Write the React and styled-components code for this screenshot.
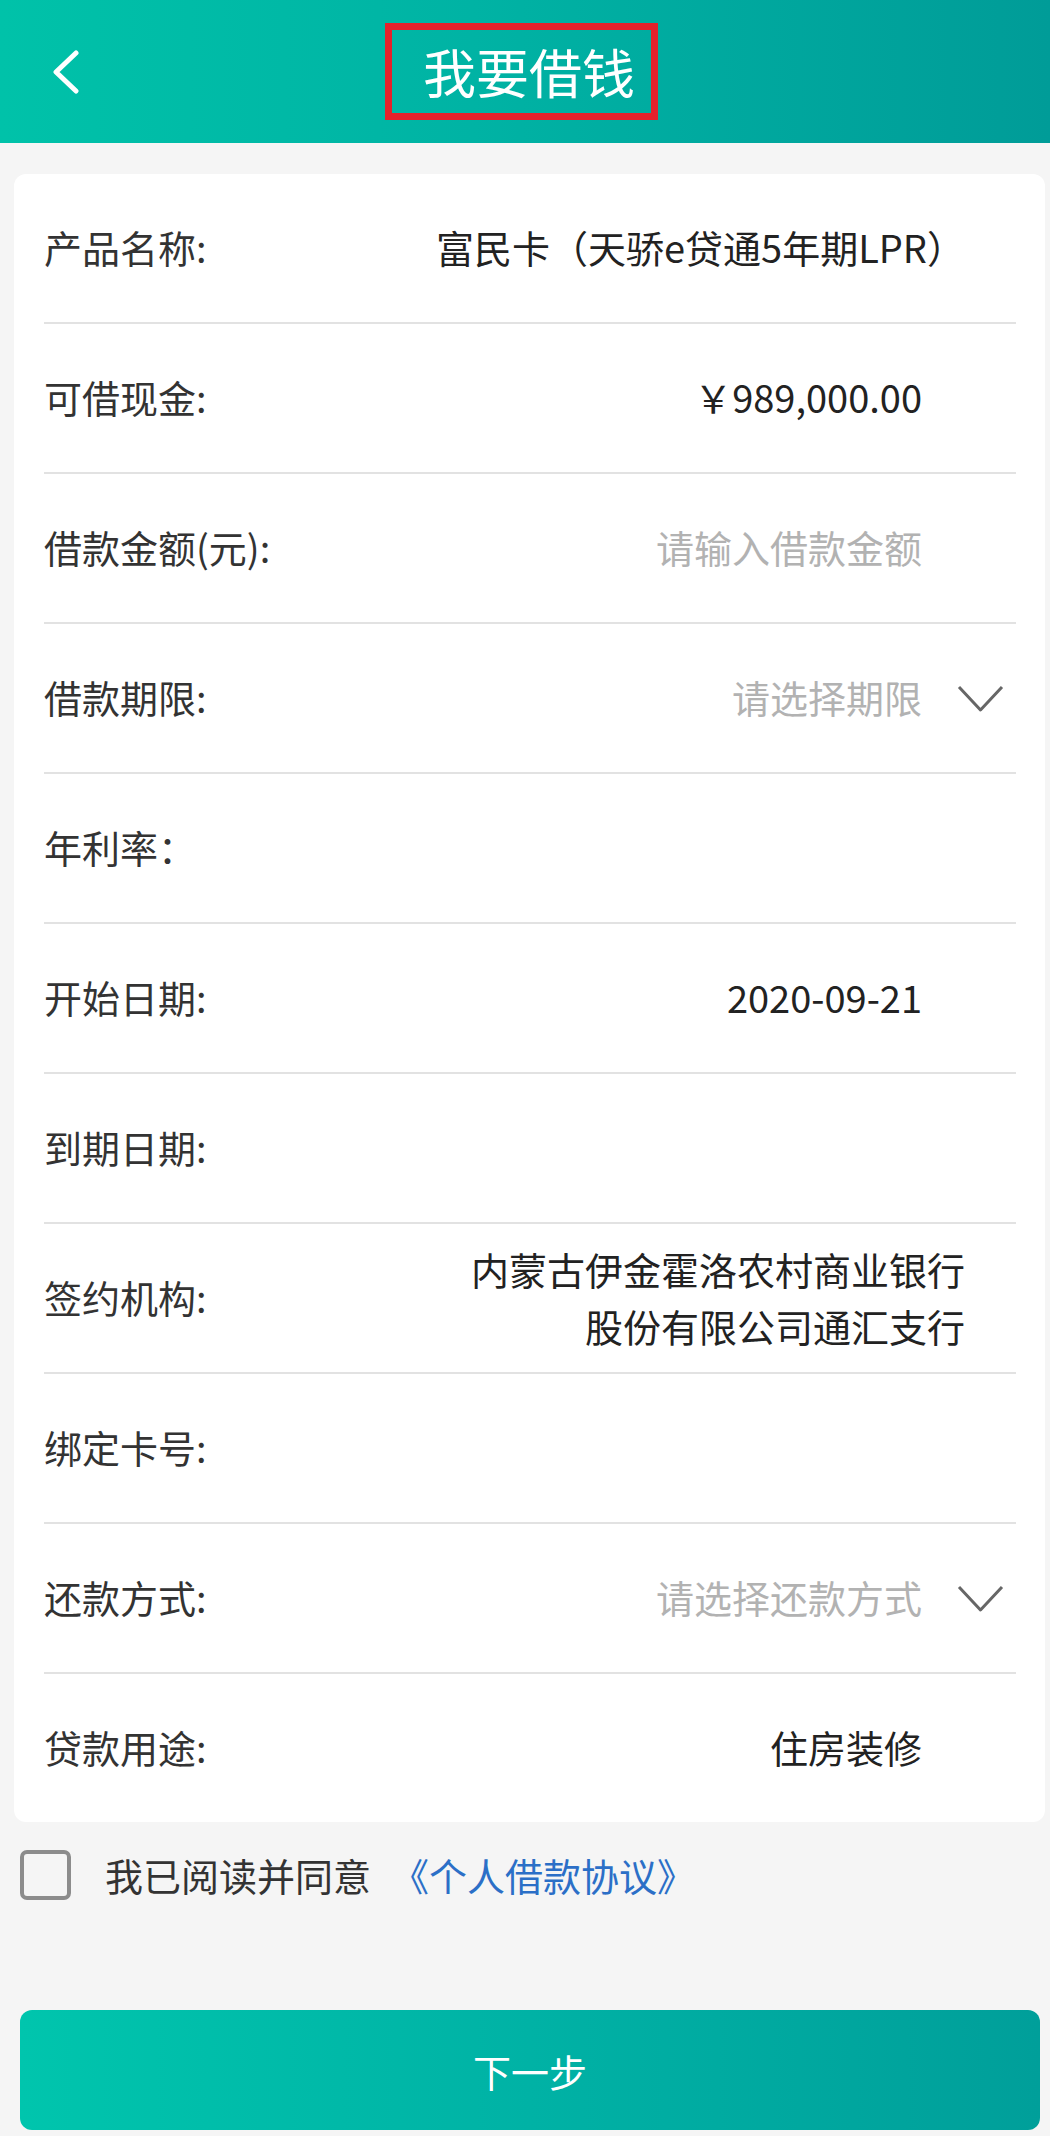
import React from "react";
import styled, { createGlobalStyle } from "styled-components";

const GlobalStyle = createGlobalStyle`
  body {
    margin: 0;
    background: #f5f5f5;
    font-family: "Noto Sans CJK SC", "Noto Sans", sans-serif;
  }
`;

const Page = styled.div`
  width: 1050px;
  min-height: 2136px;
  background: #f5f5f5;
`;

const Header = styled.header`
  height: 143px;
  display: flex;
  align-items: center;
  background: linear-gradient(90deg, #00c2a9 0%, #00b3a4 45%, #009c98 100%);
`;

const BackButton = styled.svg`
  width: 28px;
  height: 44px;
  margin-left: 52px;
  flex-shrink: 0;
`;

const TitleBox = styled.div`
  margin-left: 305px;
  border: 7px solid #e5212b;
  padding: 15px 16px 15px 31px;
  color: #ffffff;
  font-size: 53px;
  line-height: 1;
`;

const Card = styled.section`
  margin: 31px 5px 0 14px;
  padding: 0 29px 0 30px;
  background: #ffffff;
  border-radius: 12px;
`;

const Row = styled.div`
  height: 148px;
  display: flex;
  align-items: center;
  border-bottom: 2px solid #e2e2e2;

  &:last-child {
    border-bottom: none;
  }
`;

const Label = styled.span`
  font-size: 38px;
  color: #333333;
  white-space: nowrap;
  margin-top: -3px;
`;

const Value = styled.div`
  margin-left: auto;
  padding-right: ${(p) => p.$inset}px;
  text-align: right;
  font-size: 38px;
  line-height: 57px;
  margin-top: -3px;
  color: ${(p) => (p.$placeholder ? "#b2b2b2" : "#222222")};
`;

const Chevron = styled.svg`
  width: 47px;
  height: 27px;
  margin: 0 12px 0 35px;
  flex-shrink: 0;
`;

const Agreement = styled.div`
  display: flex;
  align-items: center;
  margin-top: 25px;
  padding-left: 20px;
  font-size: 38px;
  color: #333333;
`;

const CheckBox = styled.span`
  width: 51px;
  height: 50px;
  box-sizing: border-box;
  border: 4px solid #8c8c8c;
  border-radius: 7px;
  margin-right: 34px;
  flex-shrink: 0;
`;

const Link = styled.span`
  color: #2b6fc7;
  margin-left: 20px;
`;

const NextButton = styled.button`
  display: block;
  width: 1020px;
  height: 120px;
  margin: 108px 0 0 20px;
  border: none;
  border-radius: 12px;
  background: linear-gradient(90deg, #00c5ad 0%, #00b2a5 50%, #009f9a 100%);
  color: #ffffff;
  font-family: inherit;
  font-size: 38px;
  cursor: pointer;
`;

const rows = [
  { label: "产品名称:", value: "富民卡（天骄e贷通5年期LPR）", inset: 51 },
  { label: "可借现金:", value: "￥989,000.00", inset: 94 },
  { label: "借款金额(元):", value: "请输入借款金额", inset: 94, placeholder: true },
  { label: "借款期限:", value: "请选择期限", inset: 0, placeholder: true, select: true },
  { label: "年利率：", value: "", inset: 94 },
  { label: "开始日期:", value: "2020-09-21", inset: 94 },
  { label: "到期日期:", value: "", inset: 94 },
  { label: "签约机构:", value: ["内蒙古伊金霍洛农村商业银行", "股份有限公司通汇支行"], inset: 51 },
  { label: "绑定卡号:", value: "", inset: 94 },
  { label: "还款方式:", value: "请选择还款方式", inset: 0, placeholder: true, select: true },
  { label: "贷款用途:", value: "住房装修", inset: 94 },
];

const App = () => {
  return (
    <Page>
      <GlobalStyle />
      <Header>
        <BackButton viewBox="0 0 28 44">
          <polyline
            points="24,3 4,22 24,41"
            fill="none"
            stroke="#ffffff"
            strokeWidth="5"
            strokeLinecap="round"
            strokeLinejoin="round"
          />
        </BackButton>
        <TitleBox>我要借钱</TitleBox>
      </Header>

      <Card>
        {rows.map((row) => (
          <Row key={row.label}>
            <Label>{row.label}</Label>
            <Value $inset={row.inset} $placeholder={row.placeholder}>
              {Array.isArray(row.value)
                ? row.value.map((line) => <div key={line}>{line}</div>)
                : row.value}
            </Value>
            {row.select && (
              <Chevron viewBox="0 0 47 27">
                <polyline
                  points="2,2 23.5,25 45,2"
                  fill="none"
                  stroke="#666666"
                  strokeWidth="3"
                  strokeLinejoin="round"
                />
              </Chevron>
            )}
          </Row>
        ))}
      </Card>

      <Agreement>
        <CheckBox />
        我已阅读并同意
        <Link>《个人借款协议》</Link>
      </Agreement>

      <NextButton>下一步</NextButton>
    </Page>
  );
};

export default App;
